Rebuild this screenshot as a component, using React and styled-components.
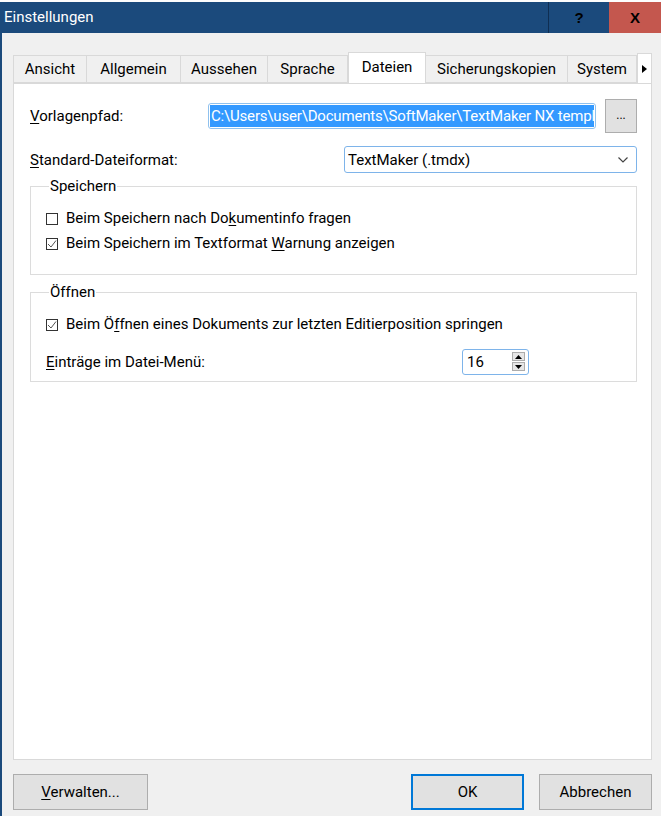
import React from 'react'
import styled, { createGlobalStyle } from 'styled-components'

const GlobalStyle = createGlobalStyle`
  html, body {
    margin: 0;
    padding: 0;
    background: #fff;
  }
  body {
    font-family: Roboto, "Noto Sans", "Liberation Sans", sans-serif;
    font-size: 15px;
    color: #000;
  }
`

const Window = styled.div`
  width: 661px;
  height: 816px;
  display: flex;
  flex-direction: column;
  overflow: hidden;
`

const TopStrip = styled.div`
  height: 2px;
  background: #fdfdfd;
`

const TitleBar = styled.div`
  height: 31px;
  background: #1b4a7c;
  display: flex;
  align-items: stretch;
`

const Title = styled.div`
  flex: 1;
  color: #fff;
  padding-left: 4px;
  display: flex;
  align-items: center;
  padding-bottom: 2px;
`

const CaptionButton = styled.div`
  width: ${p => p.$w}px;
  background: ${p => p.$bg};
  border-left: ${p => (p.$sep ? '1px solid #0f2e52' : 'none')};
  display: flex;
  align-items: center;
  justify-content: center;
  font-family: "Liberation Sans", Arial, sans-serif;
  font-weight: bold;
  font-size: 15px;
  color: #000;
`

const Body = styled.div`
  flex: 1;
  background: #f0f0f0;
  border-left: 2px solid #1b4a7c;
  display: flex;
  flex-direction: column;
  padding: 19px 9px 6px 11px;
`

const TabRow = styled.div`
  display: flex;
  align-items: flex-end;
  height: 31px;
`

const Tab = styled.div`
  width: ${p => p.$w}px;
  height: ${p => (p.$active ? 31 : 28)}px;
  box-sizing: border-box;
  display: flex;
  align-items: center;
  justify-content: center;
  background: ${p => (p.$active ? '#fff' : '#f0f0f0')};
  border: 1px solid #d9d9d9;
  border-bottom: ${p => (p.$active ? 'none' : '1px solid #d9d9d9')};
  border-left: ${p => (p.$first || p.$active ? '1px solid #d9d9d9' : 'none')};
  padding-bottom: ${p => (p.$active ? 3 : 0)}px;
  white-space: nowrap;
`

const TabScroll = styled.div`
  width: 15px;
  height: 30px;
  box-sizing: border-box;
  background: #fff;
  border: 1px solid #d9d9d9;
  border-bottom: none;
  display: flex;
  align-items: center;
  justify-content: center;
`

const Panel = styled.div`
  flex: 1;
  background: #fff;
  border: 1px solid #d9d9d9;
  padding: 15px 14px 0 16px;
  display: flex;
  flex-direction: column;
`

const Row = styled.div`
  display: flex;
  align-items: center;
  height: ${p => p.$h}px;
  margin-top: ${p => p.$mt || 0}px;
`

const Label = styled.div`
  width: ${p => (p.$w ? `${p.$w}px` : 'auto')};
  flex: ${p => (p.$w ? 'none' : '1')};
  white-space: nowrap;
`

const U = styled.span`
  text-decoration: underline;
  text-underline-offset: 2px;
`

const PathField = styled.div`
  flex: 1;
  min-width: 0;
  height: 26px;
  box-sizing: border-box;
  border: 1px solid #8fc1ee;
  border-radius: 3px;
  padding: 1px;
  display: flex;
`

const Selected = styled.div`
  flex: 1;
  min-width: 0;
  background: #3399ff;
  color: #fff;
  white-space: nowrap;
  overflow: hidden;
  line-height: 22px;
  padding-left: 1px;
  letter-spacing: -0.18px;
`

const SmallButton = styled.div`
  width: 32px;
  height: 34px;
  flex: none;
  margin-left: 9px;
  box-sizing: border-box;
  background: #e1e1e1;
  border: 1px solid #adadad;
  display: flex;
  align-items: center;
  justify-content: center;
  font-size: 12px;
  padding-bottom: 2px;
`

const Combo = styled.div`
  width: 293px;
  height: 27px;
  box-sizing: border-box;
  border: 1px solid #7eb4ea;
  border-radius: 3px;
  background: #fff;
  display: flex;
  align-items: center;
  justify-content: space-between;
  padding: 0 8px 0 3px;
`

const Group = styled.fieldset`
  margin: ${p => p.$mt}px 0 0 0;
  padding: ${p => p.$pt}px 14px ${p => p.$pb}px 15px;
  border: 1px solid #dcdcdc;
  min-width: 0;
`

const Legend = styled.legend`
  padding: 0 1px;
  margin-left: 3px;
  line-height: 20px;
`

const CheckRow = styled.div`
  display: flex;
  align-items: center;
  height: 22px;
  gap: 8px;
  margin-top: ${p => p.$mt || 0}px;
`

const Box = styled.div`
  width: 12px;
  height: 12px;
  box-sizing: border-box;
  border: 1px solid #333;
  background: #fff;
  display: flex;
  align-items: center;
  justify-content: center;
  margin-top: 2px;
`

const SpinRow = styled.div`
  display: flex;
  align-items: center;
  height: 25px;
  margin-top: 14px;
`

const Spin = styled.div`
  width: 67px;
  height: 26px;
  box-sizing: border-box;
  border: 1px solid #7eb4ea;
  border-radius: 3px;
  display: flex;
  align-items: center;
  justify-content: space-between;
  padding: 0 3px 0 4px;
`

const SpinButtons = styled.div`
  display: flex;
  flex-direction: column;
  gap: 1px;
`

const SpinButton = styled.div`
  width: 13px;
  height: 9px;
  box-sizing: border-box;
  background: #e6e6e6;
  border: 1px solid #acacac;
  display: flex;
  align-items: center;
  justify-content: center;
`

const Footer = styled.div`
  display: flex;
  align-items: center;
  margin-top: 14px;
  gap: 15px;
`

const Button = styled.div`
  width: ${p => p.$w}px;
  height: 36px;
  box-sizing: border-box;
  background: #e1e1e1;
  border: ${p => (p.$default ? '2px solid #0078d7' : '1px solid #adadad')};
  display: flex;
  align-items: center;
  justify-content: center;
  margin-left: ${p => (p.$push ? 'auto' : '0')};
`

const Check = ({ checked }) => (
  <Box>
    {checked && (
      <svg width="10" height="10" viewBox="0 0 10 10">
        <path d="M1 5 L4 8 L9 1.5" fill="none" stroke="#555" strokeWidth="1" />
      </svg>
    )}
  </Box>
)

const Triangle = ({ up }) => (
  <svg width="7" height="4" viewBox="0 0 7 4">
    <path d={up ? 'M0 4 L3.5 0 L7 4 Z' : 'M0 0 L3.5 4 L7 0 Z'} fill="#000" />
  </svg>
)

const tabs = [
  { label: 'Ansicht', w: 74 },
  { label: 'Allgemein', w: 94 },
  { label: 'Aussehen', w: 87 },
  { label: 'Sprache', w: 80 },
  { label: 'Dateien', w: 78, active: true },
  { label: 'Sicherungskopien', w: 142 },
  { label: 'System', w: 69 },
]

export default function App() {
  return (
    <>
      <GlobalStyle />
      <Window>
        <TopStrip />
        <TitleBar>
          <Title>Einstellungen</Title>
          <CaptionButton $w={60} $bg="#1b4a7c" $sep>?</CaptionButton>
          <CaptionButton $w={52} $bg="#c4574e">X</CaptionButton>
        </TitleBar>
        <Body>
          <TabRow>
            {tabs.map((t, i) => (
              <Tab key={t.label} $active={t.active} $first={i === 0} $w={t.w}>
                {t.label}
              </Tab>
            ))}
            <TabScroll>
              <svg width="5" height="8" viewBox="0 0 5 8">
                <path d="M0 0 L5 4 L0 8 Z" fill="#000" />
              </svg>
            </TabScroll>
          </TabRow>
          <Panel>
            <Row $h={34}>
              <Label $w={178}><U>V</U>orlagenpfad:</Label>
              <PathField>
                <Selected>C:\Users\user\Documents\SoftMaker\TextMaker NX templ</Selected>
              </PathField>
              <SmallButton>...</SmallButton>
            </Row>
            <Row $h={27} $mt={13}>
              <Label><U>S</U>tandard-Dateiformat:</Label>
              <Combo>
                <span>TextMaker (.tmdx)</span>
                <svg width="10" height="6" viewBox="0 0 10 6">
                  <path d="M0.5 0.5 L5 5 L9.5 0.5" fill="none" stroke="#444" strokeWidth="1.2" />
                </svg>
              </Combo>
            </Row>
            <Group $mt={3} $pt={11} $pb={20}>
              <Legend>Speichern</Legend>
              <CheckRow>
                <Check />
                <span>Beim Speichern nach Do<U>k</U>umentinfo fragen</span>
              </CheckRow>
              <CheckRow $mt={3}>
                <Check checked />
                <span>Beim Speichern im Textformat <U>W</U>arnung anzeigen</span>
              </CheckRow>
            </Group>
            <Group $mt={7} $pt={11} $pb={7}>
              <Legend>Öffnen</Legend>
              <CheckRow>
                <Check checked />
                <span>Beim Ö<U>f</U>fnen eines Dokuments zur letzten Editierposition springen</span>
              </CheckRow>
              <SpinRow>
                <Label $w={416}><U>E</U>inträge im Datei-Menü:</Label>
                <Spin>
                  <span>16</span>
                  <SpinButtons>
                    <SpinButton><Triangle up /></SpinButton>
                    <SpinButton><Triangle /></SpinButton>
                  </SpinButtons>
                </Spin>
              </SpinRow>
            </Group>
          </Panel>
          <Footer>
            <Button $w={135}><span><U>V</U>erwalten...</span></Button>
            <Button $w={113} $default $push>OK</Button>
            <Button $w={113}>Abbrechen</Button>
          </Footer>
        </Body>
      </Window>
    </>
  )
}
